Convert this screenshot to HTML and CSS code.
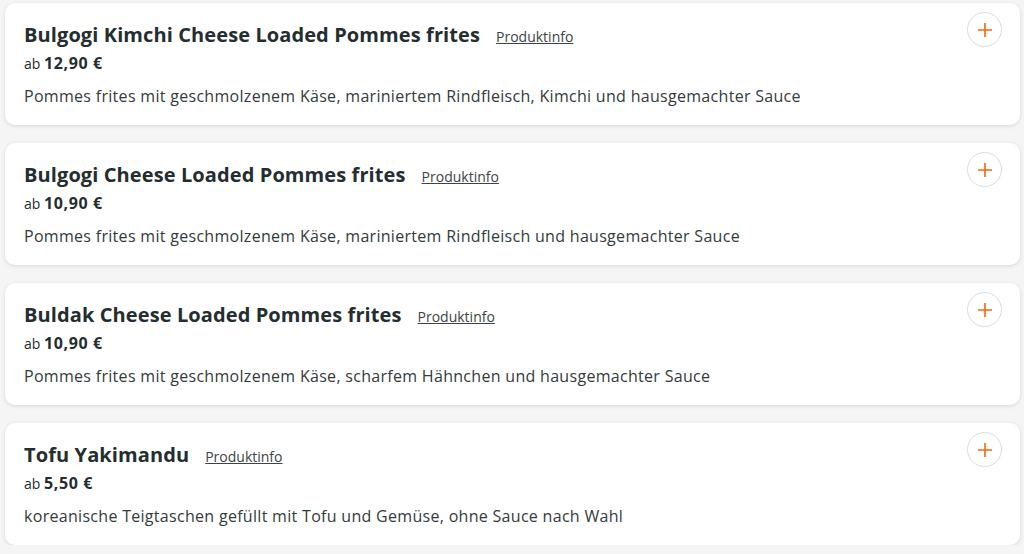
FILE: index.html
```html
<!DOCTYPE html>
<html lang="de">
<head>
    <meta charset="UTF-8">
    <meta name="viewport" content="width=device-width, initial-scale=1.0">
    <title>Speisekarte</title>
    <link rel="stylesheet" href="styles.css">
</head>
<body>
    <div class="menu">
        <div class="dish">
            <div class="dish-info">
                <div class="dish-head">
                    <h3>Bulgogi Kimchi Cheese Loaded Pommes frites</h3>
                    <a href="#">Produktinfo</a>
                </div>
                <p class="price">ab <strong>12,90 €</strong></p>
                <p class="desc">Pommes frites mit geschmolzenem Käse, mariniertem Rindfleisch, Kimchi und hausgemachter Sauce</p>
            </div>
            <button class="add" aria-label="Hinzufügen"><svg width="16" height="16" viewBox="0 0 16 16"><path d="M8 1v14M1 8h14" stroke="currentColor" stroke-width="1.6"/></svg></button>
        </div>
        <div class="dish">
            <div class="dish-info">
                <div class="dish-head">
                    <h3>Bulgogi Cheese Loaded Pommes frites</h3>
                    <a href="#">Produktinfo</a>
                </div>
                <p class="price">ab <strong>10,90 €</strong></p>
                <p class="desc">Pommes frites mit geschmolzenem Käse, mariniertem Rindfleisch und hausgemachter Sauce</p>
            </div>
            <button class="add" aria-label="Hinzufügen"><svg width="16" height="16" viewBox="0 0 16 16"><path d="M8 1v14M1 8h14" stroke="currentColor" stroke-width="1.6"/></svg></button>
        </div>
        <div class="dish">
            <div class="dish-info">
                <div class="dish-head">
                    <h3>Buldak Cheese Loaded Pommes frites</h3>
                    <a href="#">Produktinfo</a>
                </div>
                <p class="price">ab <strong>10,90 €</strong></p>
                <p class="desc">Pommes frites mit geschmolzenem Käse, scharfem Hähnchen und hausgemachter Sauce</p>
            </div>
            <button class="add" aria-label="Hinzufügen"><svg width="16" height="16" viewBox="0 0 16 16"><path d="M8 1v14M1 8h14" stroke="currentColor" stroke-width="1.6"/></svg></button>
        </div>
        <div class="dish">
            <div class="dish-info">
                <div class="dish-head">
                    <h3>Tofu Yakimandu</h3>
                    <a href="#">Produktinfo</a>
                </div>
                <p class="price">ab <strong>5,50 €</strong></p>
                <p class="desc">koreanische Teigtaschen gefüllt mit Tofu und Gemüse, ohne Sauce nach Wahl</p>
            </div>
            <button class="add" aria-label="Hinzufügen"><svg width="16" height="16" viewBox="0 0 16 16"><path d="M8 1v14M1 8h14" stroke="currentColor" stroke-width="1.6"/></svg></button>
        </div>
    </div>
</body>
</html>
```

FILE: styles.css
```css
body {
    margin: 0;
    padding: 0;
    background-color: #f5f5f5;
    font-family: "Open Sans", "Noto Sans", Arial, sans-serif;
    color: #242e30;
}
.menu {
    display: flex;
    flex-direction: column;
    gap: 18px;
    padding: 3px 4px 0 5px;
}
.dish {
    display: flex;
    justify-content: space-between;
    align-items: flex-start;
    height: 122px;
    box-sizing: border-box;
    padding: 9px 18px 0 19px;
    background: #fff;
    border-radius: 10px;
    box-shadow: 0 1px 4px rgba(0, 0, 0, 0.12);
}
.dish-info {
    padding-top: 9px;
}
.dish-head {
    display: flex;
    align-items: baseline;
    gap: 16px;
}
.dish-head h3 {
    margin: 0;
    font-size: 20px;
    line-height: 28px;
    font-weight: 700;
    letter-spacing: 0.1px;
}
.dish-head a {
    font-size: 14px;
    color: #3c4446;
    text-decoration: underline;
}
.price {
    margin: 2px 0 0;
    font-size: 14px;
    line-height: 24px;
}
.price strong {
    font-size: 16px;
    letter-spacing: 0.6px;
}
.desc {
    margin: 8px 0 0;
    font-size: 16px;
    line-height: 24px;
    letter-spacing: 0.3px;
    color: #333b3d;
}
.add {
    width: 35px;
    height: 35px;
    border-radius: 50%;
    border: 1px solid #dcdcdc;
    background: #fff;
    color: #f36805;
    display: flex;
    align-items: center;
    justify-content: center;
    padding: 0;
    cursor: pointer;
}
```
